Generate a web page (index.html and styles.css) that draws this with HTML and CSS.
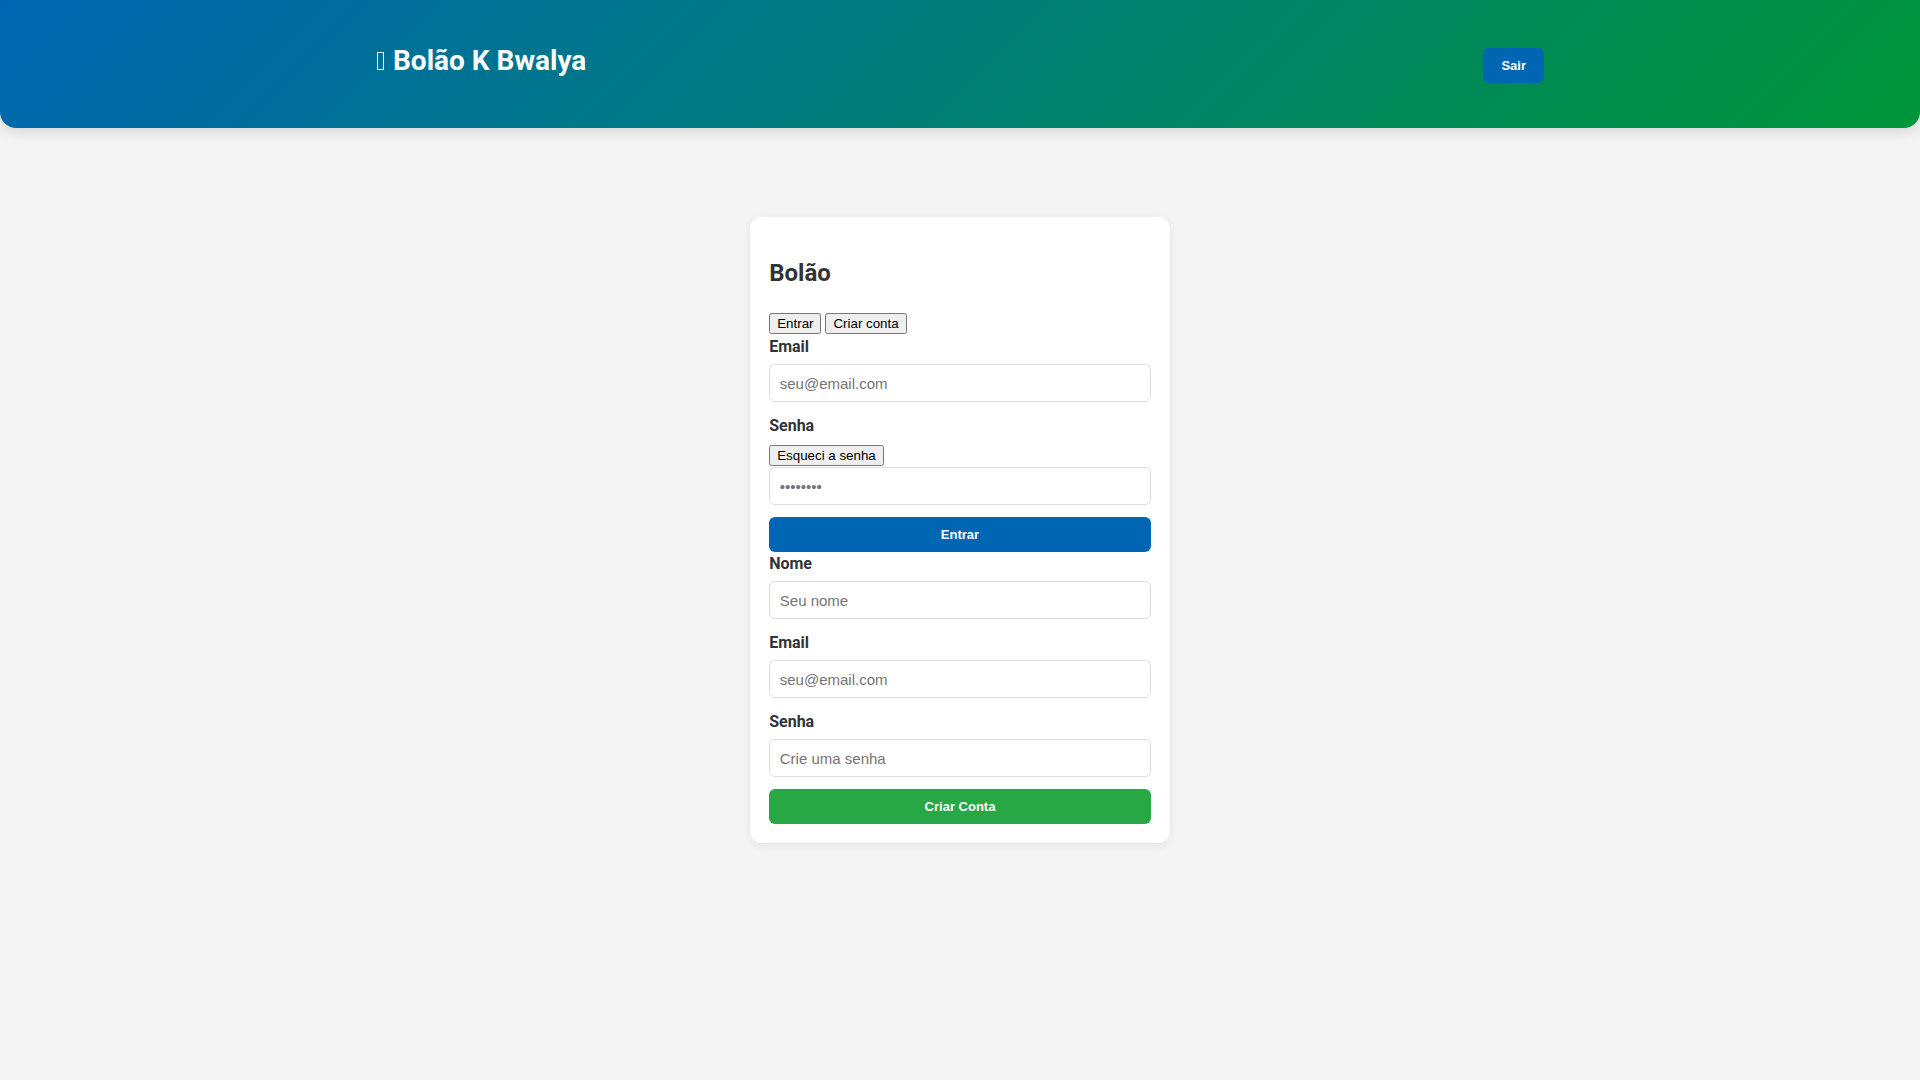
FILE: index.html
```html
<!DOCTYPE html>
<html lang="pt-BR">

<head>
    <meta charset="utf-8"/>
    <title>Bolão K Bwalya</title>
    <meta name="viewport" content="width=device-width, initial-scale=1">
    <link rel="stylesheet" href="styles.css">
</head>

<body>
<header class="topbar">
    <div class="topbar-inner">
        <h1 class="brand"><span class="brand-icon"></span> Bolão K Bwalya</h1>
        <button class="btn btn-logout">Sair</button>
    </div>
</header>

<main class="page">
    <section class="card">
        <h2 class="card-title">Bolão</h2>

        <div class="tabs">
            <button class="tab">Entrar</button>
            <button class="tab">Criar conta</button>
        </div>

        <form class="auth-form" id="loginForm">
            <label class="field-label">Email</label>
            <input class="field-input" type="email" placeholder="seu@email.com">

            <label class="field-label">Senha</label>
            <div class="forgot-row">
                <button type="button" class="tab">Esqueci a senha</button>
            </div>
            <input class="field-input" type="password" placeholder="••••••••">

            <button type="button" class="btn btn-block btn-primary">Entrar</button>
        </form>

        <form class="auth-form" id="signupForm">
            <label class="field-label">Nome</label>
            <input class="field-input" type="text" placeholder="Seu nome">

            <label class="field-label">Email</label>
            <input class="field-input" type="email" placeholder="seu@email.com">

            <label class="field-label">Senha</label>
            <input class="field-input" type="password" placeholder="Crie uma senha">

            <button type="button" class="btn btn-block btn-success">Criar Conta</button>
        </form>
    </section>
</main>
</body>

</html>
```

FILE: styles.css
```css
body {
    font-family: Roboto, "Liberation Sans", sans-serif;
    font-size: 16px;
    line-height: 1.5;
    margin: 0;
    background: #f4f4f4;
    color: #333;
}

.topbar {
    background: linear-gradient(135deg, #0066b3 0%, #009639 100%);
    border-radius: 0 0 16px 16px;
    box-shadow: 0 4px 14px rgba(0, 0, 0, 0.12);
    color: white;
}

.topbar-inner {
    max-width: 1200px;
    height: 128px;
    margin: 0 auto;
    padding: 0 16px;
    box-sizing: border-box;

    display: flex;
    align-items: center;
    justify-content: space-between;
}

.brand {
    font-size: 28px;
    font-weight: 700;
    margin: 0 0 7px;
}

/* missing-glyph box in front of the title */
.brand-icon {
    display: inline-block;
    width: 5px;
    height: 16px;
    border: 1px solid white;
    margin-left: 1px;
    margin-right: 2px;
}

.btn {
    font-family: "Liberation Sans", Arial, sans-serif;
    font-size: 13px;
    font-weight: 700;
    color: white;
    border: none;
    border-radius: 6px;
    padding: 10px 18px;
    cursor: pointer;
}

.btn-logout {
    background: #0066b3;
    margin-top: 3px;
}

.btn-block {
    display: block;
    width: 100%;
}

.btn-primary {
    background: #0066b3;
}

.btn-success {
    background: #28a745;
}

.page {
    padding: 89px 16px 40px;
}

.card {
    width: 420px;
    margin: 0 auto;
    padding: 19.2px;
    box-sizing: border-box;
    background: white;
    border-radius: 12px;
    box-shadow: 0 2px 10px rgba(0, 0, 0, 0.07);
}

.card-title {
    font-size: 24px;
    font-weight: 700;
    margin: 19px 0 20px;
}

.tab {
    font-family: "Liberation Sans", Arial, sans-serif;
    font-size: 13.333px;
}

.field-label {
    display: block;
    font-weight: 700;
    margin-bottom: 5px;
}

.field-input {
    display: block;
    width: 100%;
    box-sizing: border-box;
    margin: 0 0 12px;
    padding: 9.5px 9.6px;
    font-family: "Liberation Sans", Arial, sans-serif;
    font-size: 15px;
    border: 1px solid #ddd;
    border-radius: 6px;
    outline: none;
}
```
